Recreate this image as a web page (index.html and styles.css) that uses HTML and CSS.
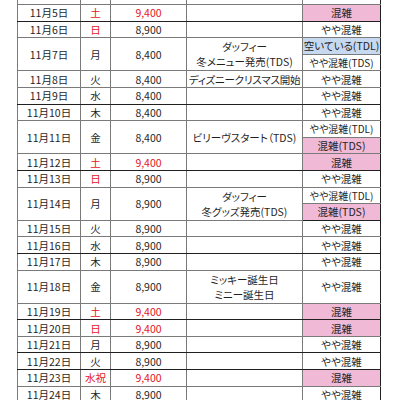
FILE: index.html
```html
<!DOCTYPE html>
<html lang="ja">
<head>
<meta charset="utf-8">
<link rel="stylesheet" href="styles.css">
</head>
<body>
<table class="cal">
<colgroup>
<col class="c-date"><col class="c-dow"><col class="c-price"><col class="c-event"><col class="c-crowd">
</colgroup>
<tbody>
<tr class="hg"><td></td><td></td><td></td><td></td><td></td></tr>
<tr class="hb"><td>11月5日</td><td class="red">土</td><td class="red">9,400</td><td></td><td class="pink">混雑</td></tr>
<tr class="hg"><td>11月6日</td><td class="red">日</td><td>8,900</td><td></td><td>やや混雑</td></tr>
<tr class="hg"><td rowspan="2">11月7日</td><td rowspan="2">月</td><td rowspan="2">8,400</td><td rowspan="2" class="ev2">ダッフィー<br>冬メニュー発売(TDS)</td><td class="blue">空いている(TDL)</td></tr>
<tr class="hg"><td class="sm">やや混雑(TDS)</td></tr>
<tr class="hg"><td>11月8日</td><td>火</td><td>8,400</td><td class="wide">ディズニークリスマス開始</td><td>やや混雑</td></tr>
<tr class="hb"><td>11月9日</td><td>水</td><td>8,400</td><td></td><td>やや混雑</td></tr>
<tr class="hg"><td>11月10日</td><td>木</td><td>8,400</td><td></td><td>やや混雑</td></tr>
<tr class="hg"><td rowspan="2">11月11日</td><td rowspan="2">金</td><td rowspan="2">8,400</td><td rowspan="2">ビリーヴスタート（TDS)</td><td class="sm">やや混雑(TDL)</td></tr>
<tr class="hg"><td class="pink">混雑(TDS)</td></tr>
<tr class="hb"><td>11月12日</td><td class="red">土</td><td class="red">9,400</td><td></td><td class="pink">混雑</td></tr>
<tr class="hg"><td>11月13日</td><td class="red">日</td><td>8,900</td><td></td><td>やや混雑</td></tr>
<tr class="hg"><td rowspan="2">11月14日</td><td rowspan="2">月</td><td rowspan="2">8,900</td><td rowspan="2" class="ev2">ダッフィー<br>冬グッズ発売(TDS)</td><td class="sm">やや混雑(TDL)</td></tr>
<tr class="hb"><td class="pink">混雑(TDS)</td></tr>
<tr class="hg"><td>11月15日</td><td>火</td><td>8,900</td><td></td><td>やや混雑</td></tr>
<tr class="hb"><td>11月16日</td><td>水</td><td>8,900</td><td></td><td>やや混雑</td></tr>
<tr class="hg"><td>11月17日</td><td>木</td><td>8,900</td><td></td><td>やや混雑</td></tr>
<tr class="hg"><td rowspan="2">11月18日</td><td rowspan="2">金</td><td rowspan="2">8,900</td><td rowspan="2" class="ev2">ミッキー誕生日<br>ミニー誕生日</td><td rowspan="2">やや混雑</td></tr>
<tr class="hg"></tr>
<tr class="hb"><td>11月19日</td><td class="red">土</td><td class="red">9,400</td><td></td><td class="pink">混雑</td></tr>
<tr class="hg"><td>11月20日</td><td class="red">日</td><td class="red">9,400</td><td></td><td class="pink">混雑</td></tr>
<tr class="hb"><td>11月21日</td><td>月</td><td>8,900</td><td></td><td>やや混雑</td></tr>
<tr class="hb"><td>11月22日</td><td>火</td><td>8,900</td><td></td><td>やや混雑</td></tr>
<tr class="hg"><td>11月23日</td><td class="red">水祝</td><td class="red">9,400</td><td></td><td class="pink">混雑</td></tr>
<tr class="hg"><td>11月24日</td><td>木</td><td>8,900</td><td></td><td>やや混雑</td></tr>
</tbody>
</table>
</body>
</html>
```

FILE: styles.css
```css
html, body {
  margin: 0;
  padding: 0;
  background: #ffffff;
  overflow: hidden;
}

.cal {
  margin: -12.6px 0 0 17px;
  width: 363px;
  table-layout: fixed;
  border-collapse: collapse;
  font-family: "Noto Sans CJK JP", "Noto Sans", sans-serif;
  font-feature-settings: "palt";
  font-size: 10.5px;
  color: #1f1f1f;
}

.c-date { width: 63px; }
.c-dow { width: 30px; }
.c-price { width: 76px; }
.c-event { width: 116px; }
.c-crowd { width: 78px; }

.cal tr {
  height: 16.6px;
}

.cal td {
  padding: 0;
  line-height: 15px;
  text-align: center;
  vertical-align: middle;
  white-space: nowrap;
  overflow: visible;
  border: 1px solid #7a7a7a;
}

.cal tr.hb td {
  border-bottom-color: #202020;
}

.cal td:last-child {
  border-right-color: #202020;
}

.red {
  color: #e3141e;
}

.pink {
  background: #f0b9d6;
}

.blue {
  background: #c6d9f0;
}

.ev2 {
  line-height: 16.6px;
}

.wide {
  letter-spacing: -0.2px;
}

.sm {
  font-size: 10px;
}
```
